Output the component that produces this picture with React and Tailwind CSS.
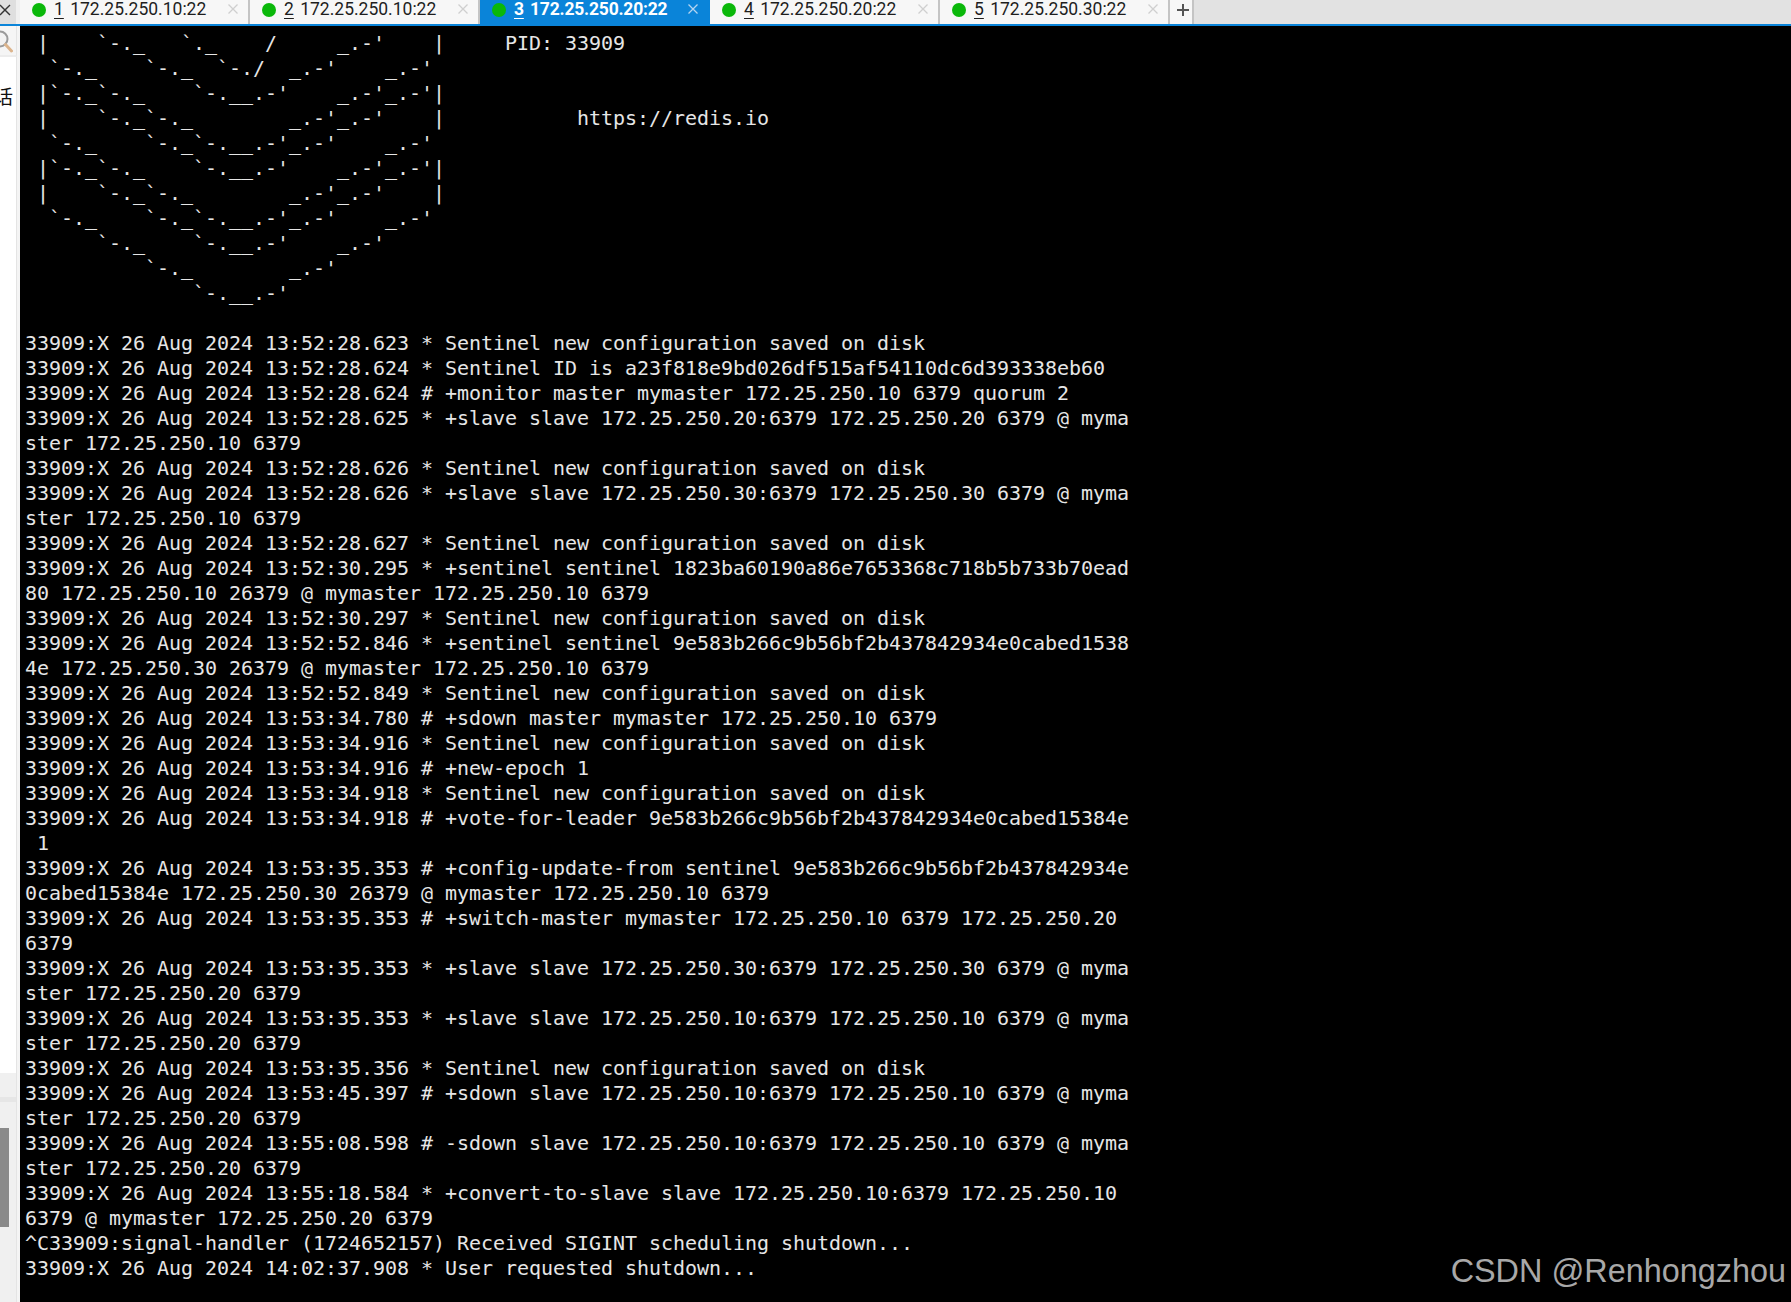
const ascii = [
  " |    `-._   `._    /     _.-'    |     PID: 33909",
  "  `-._    `-._  `-./  _.-'    _.-'",
  " |`-._`-._    `-.__.-'    _.-'_.-'|",
  " |    `-._`-._        _.-'_.-'    |           https://redis.io",
  "  `-._    `-._`-.__.-'_.-'    _.-'",
  " |`-._`-._    `-.__.-'    _.-'_.-'|",
  " |    `-._`-._        _.-'_.-'    |",
  "  `-._    `-._`-.__.-'_.-'    _.-'",
  "      `-._    `-.__.-'    _.-'",
  "          `-._        _.-'",
  "              `-.__.-'",
  " ",
];

const log = [
  "33909:X 26 Aug 2024 13:52:28.623 * Sentinel new configuration saved on disk",
  "33909:X 26 Aug 2024 13:52:28.624 * Sentinel ID is a23f818e9bd026df515af54110dc6d393338eb60",
  "33909:X 26 Aug 2024 13:52:28.624 # +monitor master mymaster 172.25.250.10 6379 quorum 2",
  "33909:X 26 Aug 2024 13:52:28.625 * +slave slave 172.25.250.20:6379 172.25.250.20 6379 @ myma",
  "ster 172.25.250.10 6379",
  "33909:X 26 Aug 2024 13:52:28.626 * Sentinel new configuration saved on disk",
  "33909:X 26 Aug 2024 13:52:28.626 * +slave slave 172.25.250.30:6379 172.25.250.30 6379 @ myma",
  "ster 172.25.250.10 6379",
  "33909:X 26 Aug 2024 13:52:28.627 * Sentinel new configuration saved on disk",
  "33909:X 26 Aug 2024 13:52:30.295 * +sentinel sentinel 1823ba60190a86e7653368c718b5b733b70ead",
  "80 172.25.250.10 26379 @ mymaster 172.25.250.10 6379",
  "33909:X 26 Aug 2024 13:52:30.297 * Sentinel new configuration saved on disk",
  "33909:X 26 Aug 2024 13:52:52.846 * +sentinel sentinel 9e583b266c9b56bf2b437842934e0cabed1538",
  "4e 172.25.250.30 26379 @ mymaster 172.25.250.10 6379",
  "33909:X 26 Aug 2024 13:52:52.849 * Sentinel new configuration saved on disk",
  "33909:X 26 Aug 2024 13:53:34.780 # +sdown master mymaster 172.25.250.10 6379",
  "33909:X 26 Aug 2024 13:53:34.916 * Sentinel new configuration saved on disk",
  "33909:X 26 Aug 2024 13:53:34.916 # +new-epoch 1",
  "33909:X 26 Aug 2024 13:53:34.918 * Sentinel new configuration saved on disk",
  "33909:X 26 Aug 2024 13:53:34.918 # +vote-for-leader 9e583b266c9b56bf2b437842934e0cabed15384e",
  " 1",
  "33909:X 26 Aug 2024 13:53:35.353 # +config-update-from sentinel 9e583b266c9b56bf2b437842934e",
  "0cabed15384e 172.25.250.30 26379 @ mymaster 172.25.250.10 6379",
  "33909:X 26 Aug 2024 13:53:35.353 # +switch-master mymaster 172.25.250.10 6379 172.25.250.20",
  "6379",
  "33909:X 26 Aug 2024 13:53:35.353 * +slave slave 172.25.250.30:6379 172.25.250.30 6379 @ myma",
  "ster 172.25.250.20 6379",
  "33909:X 26 Aug 2024 13:53:35.353 * +slave slave 172.25.250.10:6379 172.25.250.10 6379 @ myma",
  "ster 172.25.250.20 6379",
  "33909:X 26 Aug 2024 13:53:35.356 * Sentinel new configuration saved on disk",
  "33909:X 26 Aug 2024 13:53:45.397 # +sdown slave 172.25.250.10:6379 172.25.250.10 6379 @ myma",
  "ster 172.25.250.20 6379",
  "33909:X 26 Aug 2024 13:55:08.598 # -sdown slave 172.25.250.10:6379 172.25.250.10 6379 @ myma",
  "ster 172.25.250.20 6379",
  "33909:X 26 Aug 2024 13:55:18.584 * +convert-to-slave slave 172.25.250.10:6379 172.25.250.10",
  "6379 @ mymaster 172.25.250.20 6379",
  "^C33909:signal-handler (1724652157) Received SIGINT scheduling shutdown...",
  "33909:X 26 Aug 2024 14:02:37.908 * User requested shutdown...",
];

const tabs = [
  { n: "1", host: "172.25.250.10:22" },
  { n: "2", host: "172.25.250.10:22" },
  { n: "3", host: "172.25.250.20:22", active: true },
  { n: "4", host: "172.25.250.20:22" },
  { n: "5", host: "172.25.250.30:22" },
];

function Close({ active }) {
  return (
    <svg width="12" height="12" viewBox="0 0 12 12" className="shrink-0 mb-[2px]">
      <path d="M1.5 1.5 10.5 10.5M10.5 1.5 1.5 10.5" stroke={active ? "#b5d5f0" : "#cfcfcf"} strokeWidth="1.3" fill="none" />
    </svg>
  );
}

function Tab({ n, host, active }) {
  return (
    <div
      className={
        "w-[230px] h-full flex items-center pl-[12px] pr-[9px] pb-[5px] shrink-0 border-r-2 " +
        (active ? "bg-[#0a84d9] text-white font-bold border-[#0a84d9]" : "bg-[#f7f7f7] text-[#1e1e1e] border-[#c4c4c4]")
      }
    >
      <span className="w-[14px] h-[14px] rounded-full bg-[#0ab80a] shrink-0"></span>
      <span className={"ml-[8px] text-[17.5px] leading-none whitespace-pre flex-1 " + (active ? "tracking-[-0.2px]" : "")}>
        <span className="underline underline-offset-[3px]">{n}</span> <span className="ml-[2px]">{host}</span>
      </span>
      <Close active={active} />
    </div>
  );
}

function Sidebar() {
  return (
    <div className="w-[20px] shrink-0 flex flex-col bg-white border-r-[3px] border-r-[#f4f4f4] overflow-hidden">
      <div className="h-[31px] shrink-0 bg-[#f5f5f5] border-b-2 border-[#ececec] flex items-center pt-[3px] overflow-hidden border-r border-r-[#e4e4e4]">
        <svg width="22" height="24" viewBox="0 0 22 24" className="shrink-0 -ml-[9px]">
          <circle cx="9" cy="9" r="7.5" fill="#f2f2f2" stroke="#9a9a9a" strokeWidth="2" />
          <path d="M14.5 14.5 20.5 21" stroke="#dcb48c" strokeWidth="3" strokeLinecap="round" />
        </svg>
      </div>
      <div className="flex-1 min-h-0 bg-white border-r border-r-[#e4e4e4] overflow-hidden">
        <div className="mt-[27px] -ml-[6px] w-[20px] text-[19px] leading-[24px] text-[#111] font-['Noto_Sans_CJK_SC',sans-serif]">话</div>
      </div>
      <div className="h-[229px] shrink-0 bg-[#f0f0f0] border-r border-r-[#e4e4e4] flex flex-col">
        <div className="h-[24px] shrink-0"></div>
        <div className="h-[5px] shrink-0 bg-[#e6e6e6]"></div>
        <div className="h-[26px] shrink-0"></div>
        <div className="h-[99px] w-[9px] shrink-0 bg-[#8a8a8a]"></div>
      </div>
    </div>
  );
}

export default function App() {
  return (
    <div className="relative w-[1791px] h-[1302px] overflow-hidden bg-black flex flex-col font-['Roboto',sans-serif]">
      <div className="h-[26px] shrink-0 flex bg-[#e2e2e2] border-b-2 border-[#0a84d9]">
        <div className="w-[16px] shrink-0 bg-[#dfdfdf] flex items-center pb-[5px] overflow-hidden">
          <svg width="14" height="14" viewBox="0 0 14 14" className="shrink-0 -ml-[2px]">
            <path d="M2 2 12 12M12 2 2 12" stroke="#333" strokeWidth="1.4" fill="none" />
          </svg>
        </div>
        <div className="w-[4px] shrink-0 bg-[#f0f0f0]"></div>
        {tabs.map((t) => (
          <Tab key={t.n} {...t} />
        ))}
        <div className="w-[24px] h-full shrink-0 bg-[#f7f7f7] border-r-2 border-[#c4c4c4] flex items-center justify-center pb-[5px] pl-[3px]">
          <svg width="14" height="14" viewBox="0 0 14 14" className="shrink-0">
            <path d="M7 1V13M1 7H13" stroke="#555" strokeWidth="2" fill="none" />
          </svg>
        </div>
      </div>
      <div className="flex-1 min-h-0 flex">
        <Sidebar />
        <div className="flex-1 min-w-0 pl-[5px] pt-[5px] text-[#e6e6e6] text-[20px] leading-[25px] tracking-[-0.04px] whitespace-pre font-['DejaVu_Sans_Mono',monospace]">
          {ascii.concat(log).map((l, i) => (
            <div key={i} className="h-[25px]">{l}</div>
          ))}
        </div>
      </div>
      <div className="absolute right-[5px] bottom-[11px] text-[#a8a8a8] text-[32.4px] leading-[40px] font-['Liberation_Sans',sans-serif]">
        CSDN @Renhongzhou
      </div>
    </div>
  );
}
